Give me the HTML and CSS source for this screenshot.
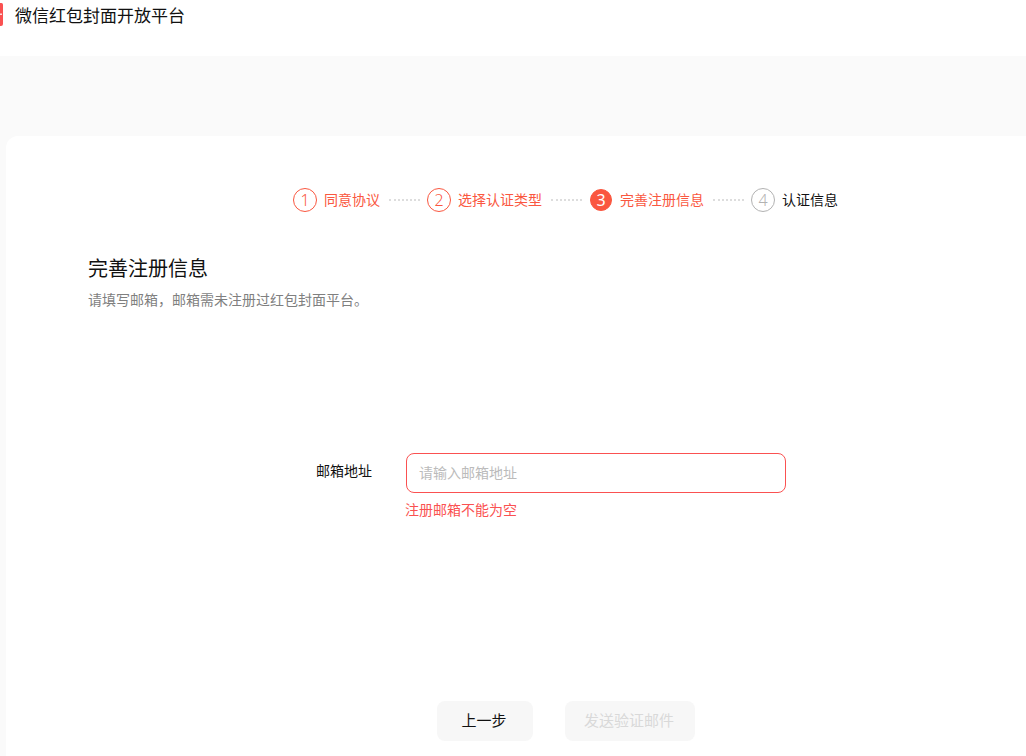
FILE: index.html
```html
<!DOCTYPE html>
<html lang="zh-CN">
<head>
<meta charset="utf-8">
<title>微信红包封面开放平台</title>
<link rel="stylesheet" href="styles.css">
</head>
<body>
<header class="topbar">
  <svg class="logo" width="3" height="24" viewBox="0 0 3 24" aria-hidden="true">
    <path d="M0 0H1.5A1.5 1.5 0 0 1 3 1.5V21A2 2 0 0 1 1 23H0Z" fill="#fa5151"/>
    <path d="M0 10.500H2V12H0Z" fill="#ffdcdc"/>
  </svg>
  <span class="brand">微信红包封面开放平台</span>
</header>
<main class="page">
  <section class="card">
    <ol class="steps">
      <li class="step done"><span class="num">1</span><span class="label">同意协议</span></li>
      <li class="dots"></li>
      <li class="step done"><span class="num">2</span><span class="label">选择认证类型</span></li>
      <li class="dots"></li>
      <li class="step current"><span class="num">3</span><span class="label">完善注册信息</span></li>
      <li class="dots"></li>
      <li class="step todo"><span class="num">4</span><span class="label">认证信息</span></li>
    </ol>
    <div class="intro">
      <h1 class="title">完善注册信息</h1>
      <p class="desc">请填写邮箱，邮箱需未注册过红包封面平台。</p>
    </div>
    <form class="form">
      <label class="field-label" for="email">邮箱地址</label>
      <div class="field-body">
        <input class="input" id="email" type="text" placeholder="请输入邮箱地址">
        <p class="error">注册邮箱不能为空</p>
      </div>
    </form>
    <div class="actions">
      <button class="btn" type="button">上一步</button>
      <button class="btn btn-disabled" type="button">发送验证邮件</button>
    </div>
  </section>
</main>
</body>
</html>
```
FILE: styles.css
```css
* { box-sizing: border-box; }
html, body { margin: 0; padding: 0; height: 756px; overflow: hidden; }
body {
  background: #fff;
  color: #111;
  font-family: "Noto Sans CJK SC", "Noto Sans", sans-serif;
}
.topbar {
  height: 56px;
  background: #fff;
  display: flex;
  align-items: flex-start;
  overflow: hidden;
}
.logo { display: block; margin: 3px 0 0; flex: none; }
.brand { margin: 3px 0 0 12px; font-size: 17px; line-height: 24px; color: #111; }
.page {
  height: 700px;
  background: #fafafa;
  padding: 80px 0 0 6px;
  overflow: hidden;
}
.card {
  height: 620px;
  background: #fff;
  border-radius: 12px 0 0 0;
  padding-top: 50px;
}
.steps {
  list-style: none;
  margin: 0 0 0 287px;
  padding: 0;
  display: flex;
  align-items: center;
  height: 28px;
}
.step { display: flex; align-items: center; font-size: 14px; line-height: 20px; }
.num {
  width: 24px;
  height: 24px;
  border-radius: 50%;
  border: 1px solid #fa5740;
  display: flex;
  align-items: center;
  justify-content: center;
  font-size: 16px;
  color: #fa5740;
  margin-right: 7px;
  font-family: "Noto Sans", sans-serif;
  font-weight: 300;
}
.label { color: #fa5740; font-size: 14px; position: relative; top: -1px; }
.current .num { background: #fa5740; color: #fff; width: 22px; height: 22px; margin: 0 8px 0 1px; font-weight: 400; }
.todo .num { border-color: #b2b2b2; color: #b2b2b2; }
.todo .label { color: #111; }
.dots {
  width: 31px;
  margin: 0 7px 0 9px;
  border-top: 2px dotted #ddd;
}
.intro { margin: 40px 0 0 82px; }
.title { margin: 0; font-size: 20px; line-height: 28px; font-weight: 400; color: #111; }
.desc { margin: 7px 0 0; font-size: 14px; line-height: 20px; color: #7f7f7f; }
.form { display: flex; margin: 144px 0 0 310px; align-items: flex-start; }
.field-label { width: 90px; font-size: 14px; line-height: 34px; color: #111; }
.input {
  display: block;
  width: 380px;
  height: 40px;
  border: 1px solid #fa5151;
  border-radius: 8px;
  padding: 0 12px 2px;
  font: inherit;
  font-size: 14px;
  color: #111;
  background: #fff;
  outline: none;
}
.input::placeholder { color: #bbb; opacity: 1; }
.error { margin: 6px 0 0 -1px; font-size: 14px; line-height: 20px; color: #fa5151; }
.actions { display: flex; gap: 32px; margin: 182px 0 0 431px; }
.btn {
  height: 40px;
  min-width: 96px;
  padding: 0 22px 4px 20px;
  border: 0;
  border-radius: 8px;
  background: #f7f7f7;
  font: inherit;
  font-size: 15px;
  color: #111;
  white-space: nowrap;
}
.btn-disabled { width: 130px; padding: 0 2px 4px 0; color: #d9d9d9; }
```
